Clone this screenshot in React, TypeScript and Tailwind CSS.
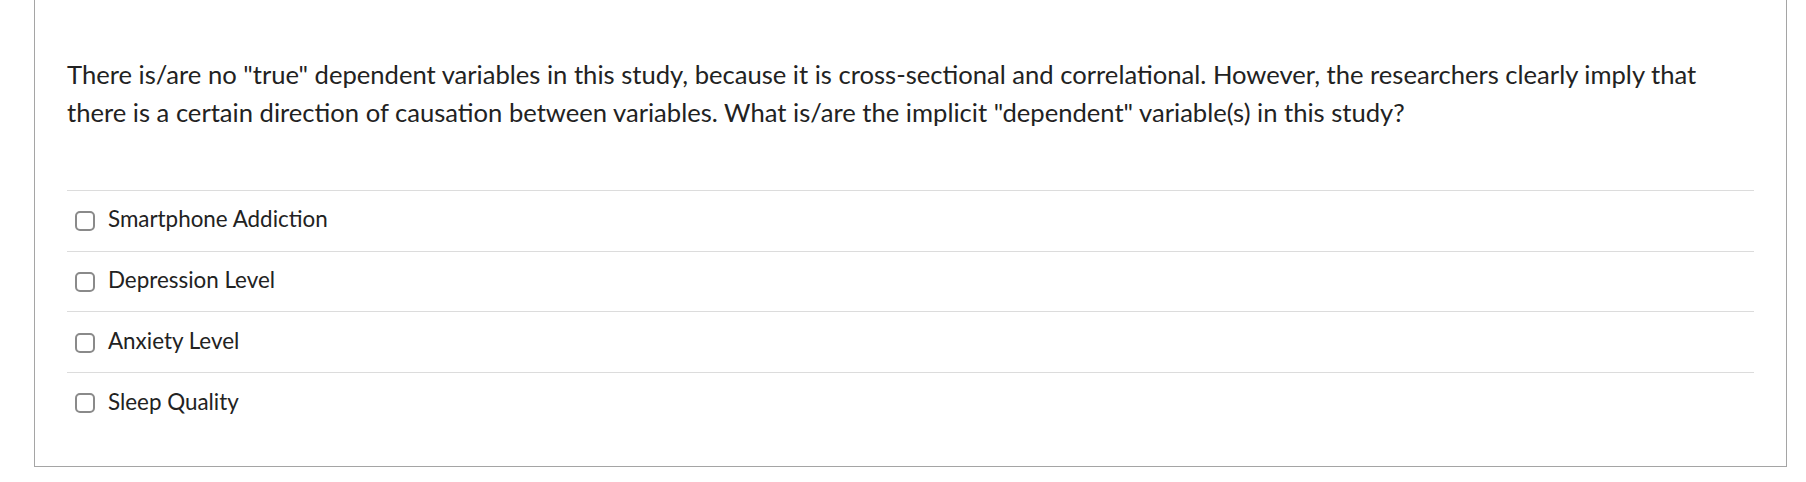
const OPTIONS = [
	"Smartphone Addiction",
	"Depression Level",
	"Anxiety Level",
	"Sleep Quality",
];

function Option({ label }: { label: string }) {
	return (
		<label className="flex h-[60.7px] items-center border-t border-[#dcdcdc] pl-2 pt-[1px]">
			<span className="h-5 w-5 shrink-0 rounded-[5px] border-2 border-[#8a8a8a] bg-white" />
			<span className="ml-[13px] pb-[3px] text-[22.4px] leading-none text-[#222]">{label}</span>
		</label>
	);
}

export default function App() {
	return (
		<div
			className="min-h-screen bg-white pl-[34px] pr-[19px]"
			style={{ fontFamily: "Lato, 'Open Sans', sans-serif" }}
		>
			<div className="border-x border-b border-[#a5a5a5] bg-white px-8 pt-[55px] pb-[33px]">
				<p className="text-[25.6px] leading-[38.4px] text-[#222]">
					There is/are no "true" dependent variables in this study, because it is
					cross-sectional and correlational. However, the researchers clearly imply
					that there is a certain direction of causation between variables. What
					is/are the implicit "dependent" variable(s) in this study?
				</p>
				<div className="mt-[58px]">
					{OPTIONS.map((o) => (
						<Option key={o} label={o} />
					))}
				</div>
			</div>
		</div>
	);
}
